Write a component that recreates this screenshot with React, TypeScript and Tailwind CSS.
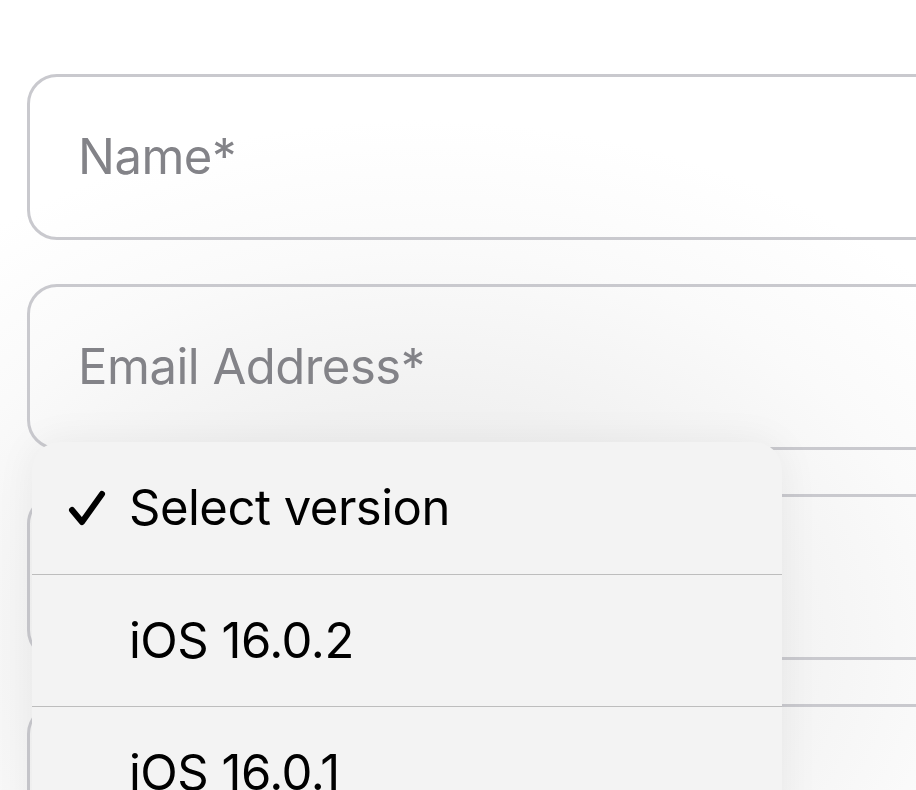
import React from "react";

const fields = ["Name*", "Email Address*", "", ""];
const versions = ["Select version", "iOS 16.0.2", "iOS 16.0.1", "iOS 16.0"];

function Check() {
  return (
    <svg className="w-[38px] h-[36px]" viewBox="0 0 38 36" fill="none">
      <path
        d="M4 20 L14 32 L34 4"
        stroke="#000"
        strokeWidth="6"
        strokeLinecap="round"
        strokeLinejoin="round"
      />
    </svg>
  );
}

export default function App() {
  return (
    <div
      className="relative w-[916px] h-[790px] overflow-hidden bg-[radial-gradient(ellipse_700px_520px_at_420px_640px,#e9e9e9_0%,#f1f1f1_45%,#fafafa_75%,#ffffff_100%)]"
      style={{ fontFamily: "Inter, 'Noto Sans', sans-serif" }}
    >
      {/* form fields run past the right edge */}
      <div className="flex flex-col gap-[44px] pl-[27px] pt-[74px] w-[1100px]">
        {fields.map((f, i) => (
          <div
            key={i}
            className="h-[166px] rounded-[30px] border-[3px] border-[#c9c9ce] flex items-center pl-[48px]"
          >
            <span className="text-[49px] tracking-[-0.5px] text-[#838388]">{f}</span>
          </div>
        ))}
      </div>

      {/* version picker menu */}
      <div className="absolute left-[32px] top-[442px] w-[750px] rounded-[28px] bg-[#f3f3f3] shadow-[0_0_40px_rgba(0,0,0,0.06)] overflow-hidden">
        {versions.map((v, i) => (
          <div
            key={v}
            className={`h-[132px] flex items-center ${i > 0 ? "border-t border-[#bdbdbd]" : ""}`}
          >
            <div className="w-[97px] flex justify-end pr-[23px]">{i === 0 && <Check />}</div>
            <span className="text-[49px] tracking-[-0.5px] text-black">{v}</span>
          </div>
        ))}
      </div>
    </div>
  );
}
